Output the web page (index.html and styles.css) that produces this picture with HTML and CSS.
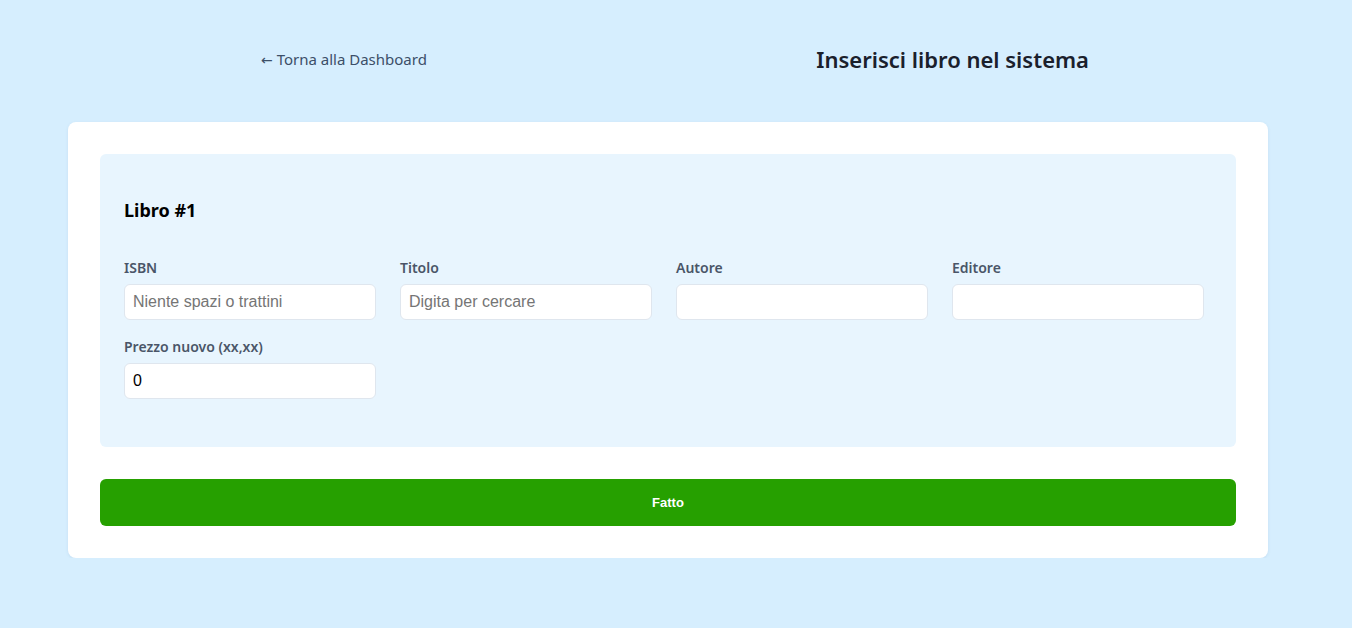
FILE: index.html
```html
<!DOCTYPE html>
<html lang="it">
<head>
<meta charset="utf-8">
<title>Inserisci libro</title>
<link rel="stylesheet" href="styles.css">
</head>
<body>
<div class="page">
  <header class="topbar">
    <a class="back" href="#"><span class="arrow">←</span> Torna alla Dashboard</a>
    <h1 class="title">Inserisci libro nel sistema</h1>
  </header>
  <main class="card">
    <section class="book">
      <h2 class="book-title">Libro #1</h2>
      <div class="grid">
        <label class="field">
          <span class="label">ISBN</span>
          <input class="input" type="text" placeholder="Niente spazi o trattini">
        </label>
        <label class="field">
          <span class="label">Titolo</span>
          <input class="input" type="text" placeholder="Digita per cercare">
        </label>
        <label class="field">
          <span class="label">Autore</span>
          <input class="input" type="text">
        </label>
        <label class="field">
          <span class="label">Editore</span>
          <input class="input" type="text">
        </label>
        <label class="field">
          <span class="label">Prezzo nuovo (xx,xx)</span>
          <input class="input" type="text" value="0">
        </label>
      </div>
    </section>
    <button class="done" type="button">Fatto</button>
  </main>
</div>
</body>
</html>
```
FILE: styles.css
```css
* { box-sizing: border-box; }
html, body { margin: 0; padding: 0; }
body {
  background: #d6eefe;
  font-family: "Noto Sans", "Open Sans", sans-serif;
  color: #1a202c;
}
.page {
  width: 1200px;
  margin-left: 68px;
  padding-top: 34px;
}
.topbar {
  display: flex;
  justify-content: space-between;
  align-items: center;
  height: 50px;
  padding: 0 179px 0 193px;
  margin-bottom: 38px;
}
.back {
  color: #3c4f68;
  text-decoration: none;
  font-size: 15px;
}
.arrow {
  font-family: "DejaVu Sans", sans-serif;
  font-size: 14px;
}
.title {
  margin: 0;
  font-size: 22px;
  font-weight: 600;
  color: #1a202c;
}
.card {
  background: #fff;
  border-radius: 8px;
  padding: 32px;
  box-shadow: 0 1px 3px rgba(100, 140, 180, 0.15);
}
.book {
  background: #e8f5fe;
  border-radius: 6px;
  padding: 44px 24px 48px 24px;
}
.book-title {
  margin: 0 0 37px 0;
  font-size: 18px;
  font-weight: 700;
  color: #000;
  line-height: 24px;
}
.grid {
  display: grid;
  grid-template-columns: repeat(4, 252px);
  column-gap: 24px;
  row-gap: 18px;
}
.field {
  display: flex;
  flex-direction: column;
  gap: 8px;
}
.label {
  font-size: 14px;
  font-weight: 600;
  color: #4a5568;
  line-height: 17px;
}
.input {
  height: 36px;
  border: 1px solid #dfe6ee;
  border-radius: 6px;
  background: #fff;
  padding: 0 8px;
  font-family: "Liberation Sans", Arial, sans-serif;
  font-size: 16px;
  color: #000;
}
.input::placeholder { color: #757575; }
.done {
  display: block;
  width: 100%;
  margin-top: 32px;
  height: 47px;
  border: none;
  border-radius: 6px;
  background: #26a000;
  color: #fff;
  font-family: "Liberation Sans", Arial, sans-serif;
  font-weight: 700;
  font-size: 13px;
}
```
